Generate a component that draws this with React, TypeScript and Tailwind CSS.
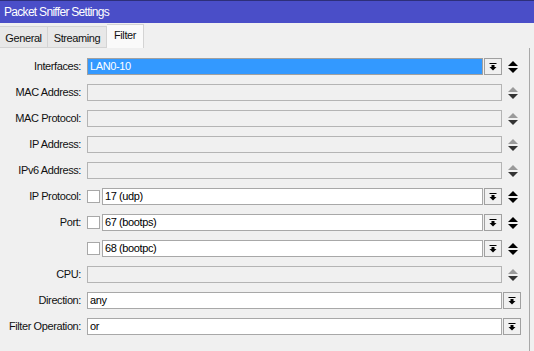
import type { ReactNode } from "react";

function DropBtn() {
  return (
    <div className="w-[18px] h-[17px] border border-[#a0a0a0] bg-[#f0f0f0] flex items-center justify-center shrink-0">
      <svg width="8" height="8" viewBox="0 0 8 8">
        <rect x="0.5" y="0" width="7" height="1" fill="#000" />
        <rect x="2.5" y="2" width="3" height="2" fill="#000" />
        <polygon points="0.5,4 7.5,4 4,7.5" fill="#000" />
      </svg>
    </div>
  );
}

function UpDown({ dim }: { dim?: boolean }) {
  return (
    <svg width="10" height="12" viewBox="0 0 10 12" className="ml-[6px] shrink-0">
      <polygon points="0,5 10,5 5,0" fill={dim ? "#9a9a9a" : "#000"} />
      <polygon points="0,7 10,7 5,12" fill={dim ? "#333" : "#000"} />
    </svg>
  );
}

function Field({ value, disabled, selected, className = "" }: { value?: string; disabled?: boolean; selected?: boolean; className?: string }) {
  const base = selected
    ? "bg-[#3399ff] text-white border-[#a0a0a0]"
    : disabled
      ? "bg-[#f0f0f0] border-[#b4b4b4]"
      : "bg-white border-[#a8a8a8] text-black";
  return (
    <div className={`h-[17px] border flex items-center pl-[2px] leading-none whitespace-nowrap ${base} ${className}`}>
      {value}
    </div>
  );
}

function Check() {
  return <div className="w-[13px] h-[13px] border border-[#a8a8a8] bg-white shrink-0 mr-[2px]" />;
}

function Row({ label, children, trailing }: { label: string; children: ReactNode; trailing?: ReactNode }) {
  return (
    <div className="flex items-center h-[17px]">
      <div className="w-[81px] text-right whitespace-nowrap">{label}</div>
      <div className="ml-[6px] w-[415px] flex items-center">{children}</div>
      {trailing}
    </div>
  );
}

export default function App() {
  return (
    <div
      className="w-[534px] h-[351px] bg-[#f0f0f0] text-[11px] tracking-[-0.4px] text-[#111] overflow-hidden flex flex-col"
      style={{ fontFamily: '"Liberation Sans", Arial, sans-serif' }}
    >
      <div className="h-[23px] bg-[#4a4ec8] border-t border-[#2d2f7a] text-white text-[12px] tracking-[-0.7px] flex items-center pl-[4px] shrink-0">
        Packet Sniffer Settings
      </div>
      <div className="h-[24px] mt-[1px] flex items-end shrink-0">
        <div className="h-[22px] w-[48px] bg-[#e8e8e8] border border-l-0 border-[#d4d4d4] flex items-center justify-center pt-[2px]">General</div>
        <div className="h-[22px] w-[59px] bg-[#e8e8e8] border border-l-0 border-[#d4d4d4] flex items-center justify-center pt-[2px]">Streaming</div>
        <div className="h-[24px] w-[37px] bg-[#fafafa] border border-l-0 border-b-0 border-[#d4d4d4] flex items-center justify-center pb-[2px]">Filter</div>
      </div>
      <div className="flex-1 flex">
        <div className="w-[530px] border-r border-[#a8a8a8] flex flex-col gap-[9px] pt-[10px]">
          <Row label="Interfaces:" trailing={<UpDown />}>
            <Field value="LAN0-10" selected className="flex-1 mr-[1px]" />
            <DropBtn />
          </Row>
          <Row label="MAC Address:" trailing={<UpDown dim />}>
            <Field disabled className="flex-1" />
          </Row>
          <Row label="MAC Protocol:" trailing={<UpDown dim />}>
            <Field disabled className="flex-1" />
          </Row>
          <Row label="IP Address:" trailing={<UpDown dim />}>
            <Field disabled className="flex-1" />
          </Row>
          <Row label="IPv6 Address:" trailing={<UpDown dim />}>
            <Field disabled className="flex-1" />
          </Row>
          <Row label="IP Protocol:" trailing={<UpDown />}>
            <Check />
            <Field value="17 (udp)" className="flex-1 mr-[1px]" />
            <DropBtn />
          </Row>
          <Row label="Port:" trailing={<UpDown />}>
            <Check />
            <Field value="67 (bootps)" className="flex-1 mr-[1px]" />
            <DropBtn />
          </Row>
          <Row label="" trailing={<UpDown />}>
            <Check />
            <Field value="68 (bootpc)" className="flex-1 mr-[1px]" />
            <DropBtn />
          </Row>
          <Row label="CPU:" trailing={<UpDown dim />}>
            <Field disabled className="flex-1" />
          </Row>
          <Row label="Direction:" trailing={<div className="ml-[1px]"><DropBtn /></div>}>
            <Field value="any" className="flex-1" />
          </Row>
          <Row label="Filter Operation:" trailing={<div className="ml-[1px]"><DropBtn /></div>}>
            <Field value="or" className="flex-1" />
          </Row>
        </div>
      </div>
    </div>
  );
}
